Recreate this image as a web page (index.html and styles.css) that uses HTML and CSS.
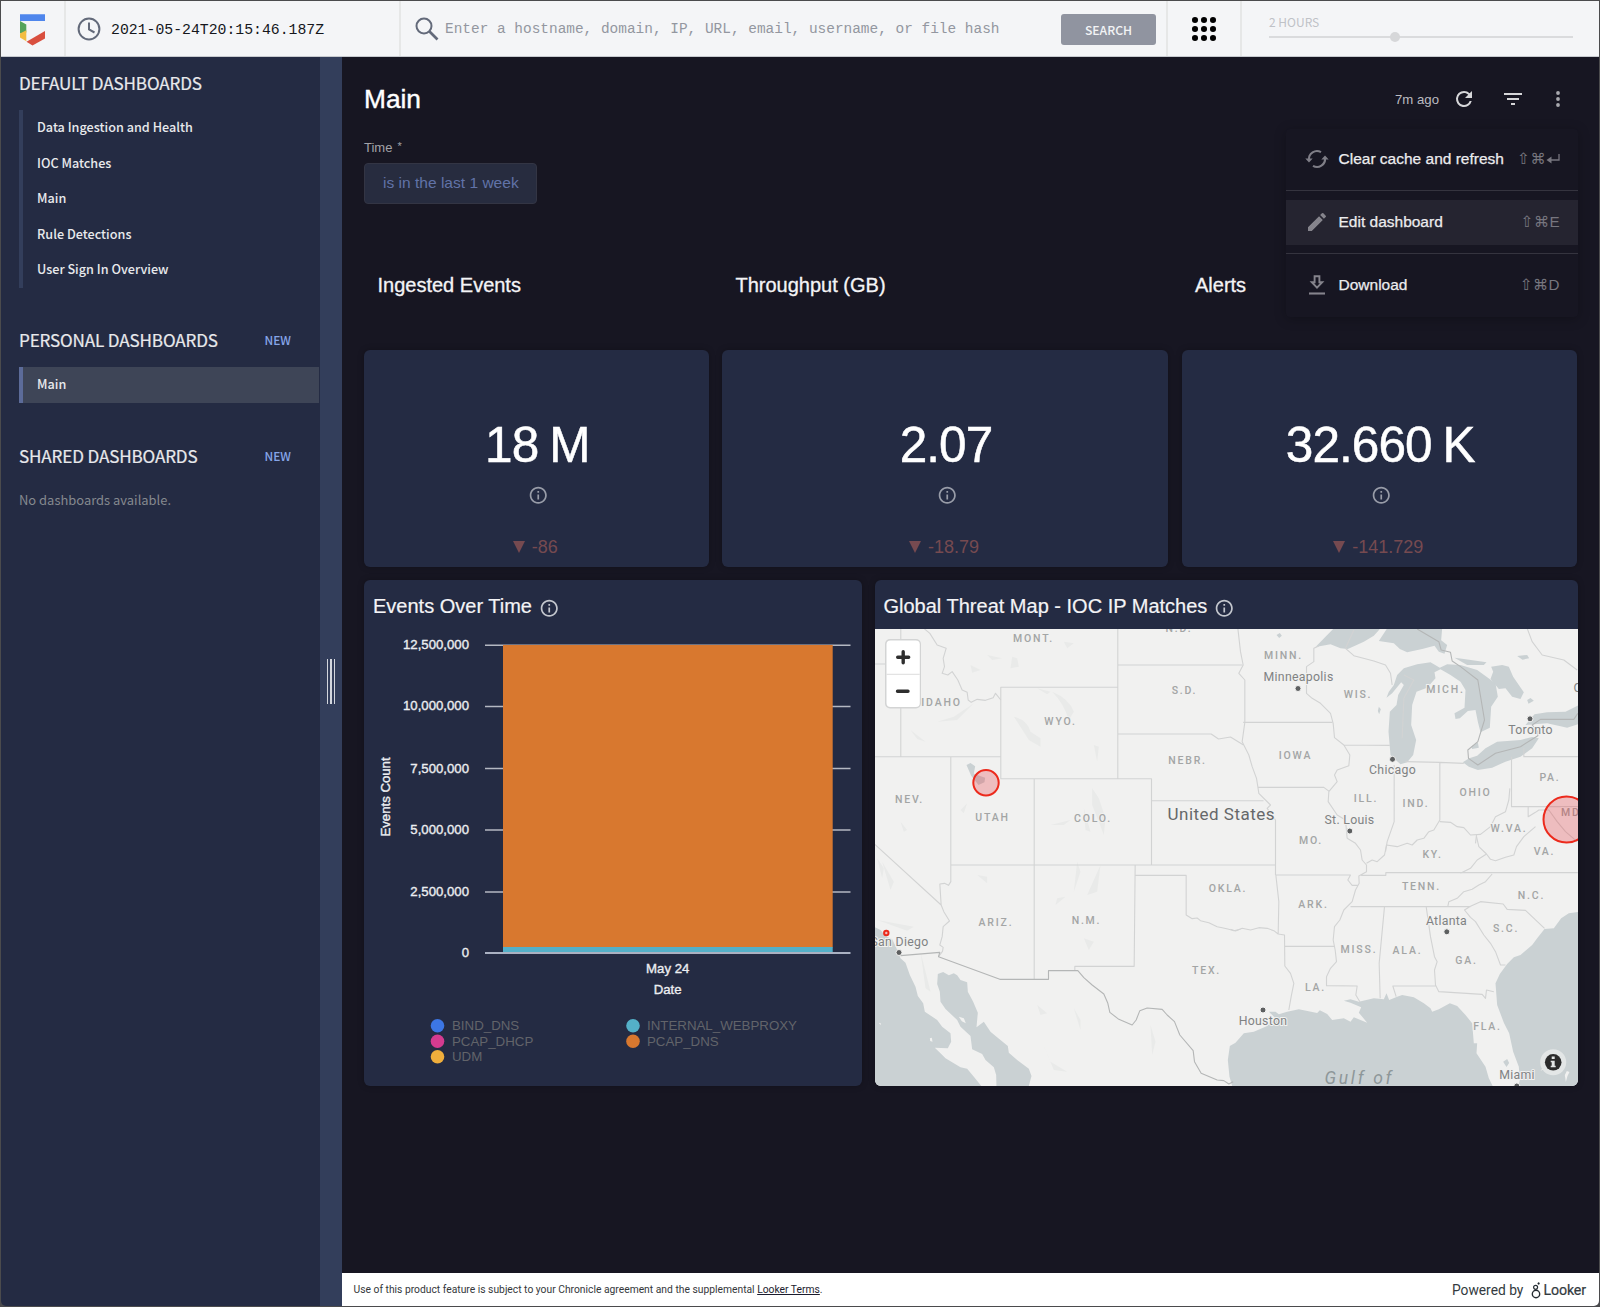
FILE: index.html
```html
<!DOCTYPE html>
<html lang="en">
<head>
<meta charset="utf-8">
<title>Main dashboard</title>
<link rel="stylesheet" href="styles.css">
</head>
<body>
<svg class="defs" width="0" height="0" aria-hidden="true">
  <symbol id="info" viewBox="0 0 24 24"><path d="M11 7h2v2h-2zm0 4h2v6h-2zm1-9C6.48 2 2 6.48 2 12s4.48 10 10 10 10-4.48 10-10S17.52 2 12 2zm0 18c-4.41 0-8-3.59-8-8s3.59-8 8-8 8 3.59 8 8-3.59 8-8 8z"/></symbol>
</svg>
<div class="window">
  <header class="topbar">
    <div class="logo">
      <svg width="26" height="32" viewBox="0 0 26 32"><path fill="#4f86ec" d="M0 .3h25v6.700H0z"/><path fill="#54a35b" d="M0 7l6.300 3.500v8L0 19.500z"/><path fill="#f2bd42" d="M0 19.500l6.300-3.300v11L0 23.500z"/><path fill="#d94f3f" d="M25 17v7.500L12.500 31.500 6.500 27.800z"/></svg>
    </div>
    <div class="clock">
      <svg width="24" height="24" viewBox="0 0 24 24" fill="none" stroke="#636a7a" stroke-width="2"><circle cx="12" cy="12" r="10.400"/><path d="M12 5.500v7l5.500 3"/></svg>
      <span class="mono">2021-05-24T20:15:46.187Z</span>
    </div>
    <div class="search">
      <svg width="24" height="24" viewBox="0 0 24 24" fill="none" stroke="#636a7a" stroke-width="2"><circle cx="9" cy="9" r="7.500"/><path d="M14.500 14.500L22.500 22.500" stroke-width="2.600"/></svg>
      <span class="mono placeholder">Enter a hostname, domain, IP, URL, email, username, or file hash</span>
      <button class="search-btn">SEARCH</button>
    </div>
    <div class="apps">
      <svg width="26" height="26" viewBox="0 0 26 26"><circle cx="4" cy="4" r="3.050"/><circle cx="13" cy="4" r="3.050"/><circle cx="22" cy="4" r="3.050"/><circle cx="4" cy="13" r="3.050"/><circle cx="13" cy="13" r="3.050"/><circle cx="22" cy="13" r="3.050"/><circle cx="4" cy="22" r="3.050"/><circle cx="13" cy="22" r="3.050"/><circle cx="22" cy="22" r="3.050"/></svg>
    </div>
    <div class="range">
      <span>2 HOURS</span>
      <svg width="304" height="12" viewBox="0 0 304 12"><path d="M0 6h304" stroke="#dadbdd" stroke-width="2"/><circle cx="126" cy="6" r="5" fill="#d6d7d9"/></svg>
    </div>
  </header>

  <div class="body">
    <nav class="sidebar">
      <section>
        <h2>DEFAULT DASHBOARDS</h2>
        <ul>
          <li>Data Ingestion and Health</li>
          <li>IOC Matches</li>
          <li>Main</li>
          <li>Rule Detections</li>
          <li>User Sign In Overview</li>
        </ul>
      </section>
      <section>
        <h2>PERSONAL DASHBOARDS <a>NEW</a></h2>
        <ul class="selected"><li>Main</li></ul>
      </section>
      <section>
        <h2>SHARED DASHBOARDS <a>NEW</a></h2>
        <p>No dashboards available.</p>
      </section>
    </nav>
    <div class="resizer"><i></i><i></i><i></i></div>

    <div class="content">
      <main>
        <div class="title-row">
          <h1>Main</h1>
          <span class="ago">7m ago</span>
          <svg class="ic-refresh" width="24" height="24" viewBox="0 0 24 24"><path fill="#d6d6d9" d="M17.650 6.350A7.960 7.960 0 0 0 12 4a8 8 0 1 0 7.730 10h-2.080A6 6 0 1 1 12 6c1.660 0 3.140.69 4.220 1.780L13 11h7V4z"/></svg>
          <svg class="ic-filter" width="24" height="24" viewBox="0 0 24 24"><path fill="#d6d6d9" d="M10 18h4v-2h-4zM3 6v2h18V6zm3 7h12v-2H6z"/></svg>
          <svg class="ic-more" width="24" height="24" viewBox="0 0 24 24"><g fill="#a9a9af"><circle cx="12" cy="6" r="1.900"/><circle cx="12" cy="12" r="1.900"/><circle cx="12" cy="18" r="1.900"/></g></svg>
        </div>

        <div class="menu">
          <div class="item">
            <svg width="24" height="24" viewBox="0 0 24 24" fill="none" stroke="#7f7e87" stroke-width="2.100"><path d="M4 13a8 8 0 0 1 12-7.800M20 11a8 8 0 0 1-12 7.800"/><path d="M.3 11.500h7.400L4 15.500zM16.300 12.500h7.400L20 8.500z" fill="#7f7e87" stroke="none"/></svg>
            <span>Clear cache and refresh</span><kbd>⇧⌘<svg width="14" height="12" viewBox="0 0 14 12" fill="none" stroke="currentColor" stroke-width="1.300"><path d="M13 1v6H3"/><path d="M5.500 3.500L.5 7l5 3.500z" fill="currentColor" stroke="none"/></svg></kbd>
          </div>
          <hr>
          <div class="item active">
            <svg width="26" height="26" viewBox="0 0 24 24"><path fill="#85848c" d="M3 17.250V21h3.750L17.810 9.940l-3.750-3.750zM20.710 7.040a1 1 0 0 0 0-1.410l-2.340-2.340a1 1 0 0 0-1.410 0l-1.830 1.830 3.750 3.750z"/></svg>
            <span>Edit dashboard</span><kbd>⇧⌘E</kbd>
          </div>
          <hr>
          <div class="item">
            <svg width="24" height="24" viewBox="0 0 24 24" fill="none" stroke="#85848c" stroke-width="1.900"><path d="M9.600 3.200h4.800v6h2.800L12 14.600 6.800 9.200h2.800z"/><path d="M4 20.500h16" stroke-width="2.100"/></svg>
            <span>Download</span><kbd>⇧⌘D</kbd>
          </div>
        </div>

        <label>Time <sup>*</sup></label>
        <div class="filter">is in the last 1 week</div>

        <div class="grid heads"><h3>Ingested Events</h3><h3>Throughput (GB)</h3><h3>Alerts</h3></div>

        <div class="grid kpis">
          <div class="card kpi"><strong>18 M</strong><svg class="info"><use href="#info"/></svg><em><i></i>-86</em></div>
          <div class="card kpi"><strong>2.07</strong><svg class="info"><use href="#info"/></svg><em><i></i>-18.79</em></div>
          <div class="card kpi"><strong>32.660 K</strong><svg class="info"><use href="#info"/></svg><em><i></i>-141.729</em></div>
        </div>

        <div class="row">
          <div class="card chart">
            <div class="card-head">Events Over Time <svg class="info"><use href="#info"/></svg></div>
            <svg class="plot" width="498" height="457" viewBox="364 629 498 457">
              <g stroke="#b4b8c2" stroke-width="1.500"><path d="M485 645.300H850.500M485 706.500H850.500M485 768.500H850.500M485 830H850.500M485 892H850.500"/></g>
              <path fill="#d8782f" d="M503 645h329.700v302.500H503z"/>
              <path fill="#54b0c8" d="M503 947h329.700v6H503z"/>
              <path stroke="#aab1c2" stroke-width="1.800" d="M485 953H850.500"/>
              <g class="axis" text-anchor="end"><text x="469" y="649.200">12,500,000</text><text x="469" y="710.300">10,000,000</text><text x="469" y="772.500">7,500,000</text><text x="469" y="833.600">5,000,000</text><text x="469" y="895.700">2,500,000</text><text x="469" y="956.700">0</text></g>
              <g class="axis" text-anchor="middle"><text x="667.700" y="973">May 24</text><text x="667.700" y="994">Date</text><text transform="translate(389.500 797) rotate(-90)">Events Count</text></g>
              <g class="legend">
                <circle cx="437.500" cy="1025.700" r="6.800" fill="#3c76e5"/><text x="452" y="1030">BIND_DNS</text>
                <circle cx="437.500" cy="1041.300" r="6.800" fill="#d43b90"/><text x="452" y="1045.700">PCAP_DHCP</text>
                <circle cx="437.500" cy="1056.800" r="6.800" fill="#efae3c"/><text x="452" y="1061.200">UDM</text>
                <circle cx="633" cy="1025.700" r="6.800" fill="#54b0c8"/><text x="647" y="1030">INTERNAL_WEBPROXY</text>
                <circle cx="633" cy="1041.300" r="6.800" fill="#d8782f"/><text x="647" y="1045.700">PCAP_DNS</text>
              </g>
            </svg>
          </div>

          <div class="card map">
            <div class="card-head">Global Threat Map - IOC IP Matches <svg class="info"><use href="#info"/></svg></div>
            <svg class="plot" width="703" height="458" viewBox="874.500 629 703 458">
              <path fill="#f1f1f0" d="M874 629h704v458H874z"/>
              <!-- terrain shading -->
              <g fill="#e9eae9" transform="translate(870 575) scale(.33333)">
                <path d="M545 350q50 20 65 60l-15 25q-15-50-50-85zM430 425q40 10 50 45l30 20v25l-35-20q-25-40-45-70zM425 245l15 5 5 25-25 5zM120 465l45 35-25-8zM200 440l50-15 60-40-50 50zM500 340l40 10-10 8zM670 510l15 5-5 45zM665 640l20 30 20 60-5 50-15-40-20-50zM640 700l20 70-15-5zM540 750l60-15-20 15zM300 270l30 15-25 8zM270 705l20-20-10 30zM350 240l45 10-30 5zM580 200l30 5-20 15zM90 740l20 25-10 5z"/>
                <path d="M20 850l20 30-5 30zM35 860l35 60-10 25zM320 900l30 5v20zM620 860l-10 90 20-60zM690 870l-10 80-30 10zM560 970l25-5-30 25zM640 1090l30 10-15 25zM150 1130l30 120-15-10zM510 1390l30 70 50 30-40-5zM840 1350l15 50-10 40zM20 1035l110 20-20 12zM500 1290l30 25-20 5zM610 1300l20 35v30z"/>
              </g>
              <!-- lakes, inland water -->
              <g fill="#cad1d3" transform="translate(1230 575) scale(.33333)">
                <path d="M310 160L285 185 255 216 300 208 330 220 352 222 400 200 430 182 450 160zM470 160L445 198 490 205 508 222 530 232 575 222 612 212 625 230 642 236 650 210 632 196 635 160z"/>
                <path d="M520 280L500 300 490 330 475 350 468 368 485 355 512 322 520 330 503 360 498 390 478 410 474 470 480 540 510 568 530 562 548 540 557 495 542 450 545 390 558 350 590 338 615 310 612 292 630 283 660 300 690 320 705 345 702 398 672 415 675 432 688 430 712 408 735 405 742 440 750 472 778 458 782 395 802 365 795 325 740 285 690 270 650 268 628 278 600 262 560 268z"/>
                <path d="M672 248L700 252 768 262 760 270 710 270zM782 275L815 270 835 275 848 305 865 330 880 352 870 372 845 365 825 340 805 342 780 312 788 290zM890 375l10-6 10 8-16 9zM860 243l30-3 6 10-20 4zM445 395l6 8-5 15-4-10zM138 180l10-6 6 8-8 7z"/>
                <path d="M716 550L697 562 715 575 742 585 785 578 825 560 870 545 905 520 925 490 905 486 870 495 800 500 765 520 740 542zM722 515l20-13 3 16-20 4zM912 418L885 450 950 445 1010 458 1050 445V388L1005 410 950 412z"/>
              </g>
              <g fill="#cad1d3" transform="translate(870 575) scale(.33333)"><path d="M288 570l12-6 14 10-4 22 34 12-2 14-18 8-22-28z"/></g>
              <!-- oceans and gulfs -->
              <g fill="#cad1d3" transform="translate(870 830) scale(.33333)">
                <path d="M10 290L30 300 45 318 65 328 76 350 90 385 105 398 118 435 135 470 142 498 158 520 163 545 200 570 215 590 240 610 242 635 232 655 193 653 210 670 225 685 270 712 290 716 310 740 338 775H10z"/>
                <path d="M202 432L218 426 235 436 250 430 260 436 270 450 290 457 292 485 308 515 322 548 318 592 340 575 360 605 378 620 412 648 415 668 440 690 475 716 483 738 473 775H378L377 735 370 712 345 690 335 672 305 658 300 618 270 590 260 570 225 537 210 515 208 485 200 462z"/>
                <path fill="#f1f1f0" d="M265 560l15 5 6 15-12-6zM178 625l6-2 2 12-7-2zM25 578l6 2-1 6z"/>
              </g>
              <g fill="#cad1d3" transform="translate(1230 830) scale(.33333)">
                <path d="M-2 648L15 638 40 610 70 605 110 588 135 565 115 545 135 545 145 553 170 545 205 538 260 549 268 541 290 552 305 570 340 565 360 575 370 562 410 578 385 548 392 532 360 518 340 512 360 508 385 515 430 505 460 508 468 490 476 510 500 500 515 495 550 502 580 520 600 535 605 545 625 538 658 520 680 528 705 555 725 580 730 640 740 640 738 670 765 710 775 745 790 775H7L-3 740-8 690z"/>
                <path d="M1050 245L1015 250 992 265 970 295 942 297 920 325 905 345 870 375 850 382 830 402 808 432 795 460 800 525 820 578 836 610 848 665 865 710 868 750 862 775H1050zM818 695l12-8 6 12-8 12z"/>
                <path fill="#f1f1f0" d="M1003 735l6-12 8 3-6 12-5 18zM930 722l20-22 5 12z"/>
              </g>
              <!-- state borders -->
              <g class="border">
                <path d="M900.300 629V756.500M874 664H900.300M874 756.700H1000.300M950.300 756.700V882M1000.300 687.300H1117.300V778.700H1000.300zM1117.300 629V687.300M1117.300 665H1242M1117.300 734H1210.700L1218 739 1230 737 1243 745M1117.300 778.700H1151V865M1033.700 778.700V979.300M1151 800.700H1263M950.300 865H1274.700M1275 820V875"/>
                <g transform="translate(870 575) scale(.33333)"><path d="M160 160L178 175 200 210 227 220 218 250 222 275 215 295 232 300 245 290 262 315 275 345 290 352 293 375 302 382 320 373 345 376 368 368 375 355 391 375"/></g>
                <g transform="translate(870 830) scale(.33333)"><path d="M241 155L234 166 222 160 208 162 212 225 220 245 237 273 218 290 215 320 208 345 218 352 216 364 204 380M13 43L212 225M794 105L791 409H613V422M794 136H947V255L965 266 980 264 990 272 1015 278 1040 290 1055 293 1075 298 1090 302 1110 298"/></g>
                <g transform="translate(1230 830) scale(.33333)"><path d="M0 298L15 303 35 295 60 300 85 293 110 295 130 302 143 312 162 315 163 408 180 430 190 460 182 500 175 540M136 135H360L352 150 365 166H383M136 135L145 215 143 312M163 349H310M350 25L375 40 390 60 395 90 408 105 408 125 385 138 386 160 375 180 365 215 340 240 328 270 312 290 308 330 314 360 318 395 300 415 288 440 288 467 380 468 376 495 388 515M360 230H720M392 136H466V128H1042M462 230L446 400 449 505M587 230L600 320 612 380 620 395 612 420 615 465 625 485 755 493 765 505 768 480 790 485M615 468H487L497 500M720 229L702 240 720 262 735 275 760 315 780 340 795 365 810 405H825M720 229L750 215 818 222 830 238 885 241 942 295M652 229L655 215 680 205 700 185 725 178 745 165 765 155 785 132M690 130L720 115 740 90 768 72M738 20L745 50 768 72 780 88 795 92 825 82 850 75 858 50 880 20 915-10M408 100L425 90 440 95 462 75 468 45 500 50 530 40 545 45 560 30 580 25 595 5"/></g>
                <g transform="translate(1230 575) scale(.33333)"><path d="M22 160L30 230 38 270 25 295 43 315V440M38 442H305M43 442L35 500 55 540 65 575 78 610 82 635 85 655 120 690 110 700 135 735M82 637H280L297 650M265 213L250 220V260L228 275V355L245 370 270 385 300 415 308 445 312 488 340 510 358 540 355 572 320 585 312 600 320 620 295 650 293 680 320 720 345 735 350 790M345 220L370 242 430 258 465 270 480 295 485 330M340 510L478 511M491 570V740L470 800 465 830M525 560L628 562 700 565M628 562V735L610 765 595 770M843 545V695H1042M628 740L660 742 680 755 700 758 720 780 750 778 780 755 795 725 825 710 835 675 838 640M735 805L738 780M880 520V545H1042M893 695V725L915 712 925 705 955 705 980 740 1005 770 1040 800M890 160L905 200 935 240 1000 255 1040 285M520 300L550 315 520 370 515 490M370 165L345 220"/></g>
              </g>
              <!-- national borders -->
              <g class="border nation">
                <g transform="translate(870 830) scale(.33333)"><path d="M90 377L208 367 204 380 388 448H534V422H622L640 443 665 465 700 492 712 520 718 547 745 568 785 585 797 570 808 542 830 534 875 538 890 555 912 575 928 615 968 662 972 695 992 730 1040 750 1060 752 1075 762 1088 755"/></g>
                <g transform="translate(1230 575) scale(.33333)"><path d="M560 162L625 200 632 225 660 232 665 258 690 275 742 315 762 435 742 500 712 525 714 550 742 570 795 535 870 515 922 482V470L905 450 930 433H1030L1042 415"/></g>
              </g>
              <g class="state" text-anchor="middle">
                <text x="1033" y="641.500">MONT.</text><text x="1178.500" y="632">N.D.</text><text x="941" y="705.500">IDAHO</text><text x="1060" y="725">WYO.</text><text x="1184" y="694">S.D.</text><text x="1187" y="763.500">NEBR.</text><text x="909" y="803">NEV.</text><text x="992" y="820.500">UTAH</text><text x="1092.500" y="822">COLO.</text><text x="995.500" y="926">ARIZ.</text><text x="1086" y="924">N.M.</text><text x="1227.500" y="891.500">OKLA.</text><text x="1206" y="974">TEX.</text>
                <text x="1283" y="659">MINN.</text><text x="1357.500" y="698">WIS.</text><text x="1445" y="693">MICH.</text><text x="1295" y="758.500">IOWA</text><text x="1365.500" y="801.500">ILL.</text><text x="1415.500" y="806.500">IND.</text><text x="1475" y="795.500">OHIO</text><text x="1549.500" y="781">PA.</text><text x="1572.500" y="816">MD.</text><text x="1508.500" y="832">W.VA.</text><text x="1310.500" y="843.500">MO.</text><text x="1432" y="857.500">KY.</text><text x="1544" y="854.500">VA.</text><text x="1421" y="889.500">TENN.</text><text x="1531" y="898.500">N.C.</text><text x="1313" y="908">ARK.</text><text x="1505.500" y="932">S.C.</text><text x="1358.500" y="953">MISS.</text><text x="1407" y="953.500">ALA.</text><text x="1466" y="963.500">GA.</text><text x="1315" y="991">LA.</text><text x="1487" y="1029.500">FLA.</text>
              </g>
              <g class="city" text-anchor="middle">
                <text x="1298" y="681">Minneapolis</text><text x="1392" y="774">Chicago</text><text x="1349" y="824">St. Louis</text><text x="1530" y="733.500">Toronto</text><text x="1446" y="925">Atlanta</text><text x="1262.500" y="1024.500">Houston</text><text x="1516.500" y="1078.500">Miami</text><text x="899" y="945.500">San Diego</text><text x="1577.500" y="692">O</text>
              </g>
              <text class="country" x="1220.500" y="820" text-anchor="middle" textLength="107">United States</text>
              <text class="sea" x="1324" y="1084" textLength="67">Gulf of</text>
              <g fill="#5d5f60" stroke="#f4f4f3" stroke-width="1"><circle cx="1297.500" cy="688.500" r="3"/><circle cx="1392" cy="759.300" r="3"/><circle cx="1349.300" cy="831" r="3"/><circle cx="1529.500" cy="718.800" r="3"/><circle cx="1446.300" cy="931.800" r="3"/><circle cx="1262.500" cy="1010" r="3"/><circle cx="1516.300" cy="1086" r="3"/><circle cx="898.500" cy="952.500" r="3"/></g>
              <g fill="#e8222a" fill-opacity=".25" stroke="#ec2a1c" stroke-width="2"><circle cx="985.500" cy="782.700" r="12.700"/><circle cx="1566" cy="819.500" r="23"/><circle cx="885.800" cy="933" r="2.200"/></g>
              <g><rect x="884.500" y="639" width="36" height="69.500" rx="5" fill="#d3d4d4"/><rect x="886" y="640.500" width="33.300" height="66.500" rx="4" fill="#fff"/><path d="M886 674.300h33.300" stroke="#ddd"/><path d="M897.200 657.300h11M902.700 651.800v11M897 691.200h10.500" stroke="#2e2e2e" stroke-width="3.400" stroke-linecap="round"/></g>
              <g><circle cx="1552.700" cy="1062.300" r="13" fill="#e3e6e6"/><circle cx="1552.700" cy="1062.300" r="8.300" fill="#2b2b2b"/><path d="M1551.200 1056.500h3v2.500h-3zM1550.200 1060.700h4v5h1v1.600h-5v-1.600h1v-3.400h-1z" fill="#e3e6e6"/></g>
            </svg>
          </div>
        </div>
      </main>
      <footer>
        <span>Use of this product feature is subject to your Chronicle agreement and the supplemental <u>Looker Terms</u>.</span>
        <div class="powered"><span>Powered by</span><svg width="11" height="17" viewBox="0 0 11 17" fill="none" stroke="#262d33"><circle cx="5" cy="12" r="3.700" stroke-width="1.400"/><circle cx="4.600" cy="5.300" r="2" stroke-width="1.200"/><circle cx="7.600" cy="1.500" r=".9" fill="#262d33" stroke-width=".4"/></svg><span class="looker">Looker</span></div>
      </footer>
    </div>
  </div>
</div>
</body>
</html>
```
FILE: styles.css
```css
* { box-sizing: border-box; }
body { margin: 0; background: #4b4b4d; font-family: "Liberation Sans", Arial, sans-serif; }
.defs { display: block; position: absolute; }
h1, h2, h3, ul, p { margin: 0; padding: 0; font-weight: 400; }
ul { list-style: none; }
svg { flex: none; display: block; }
.window { width: 1600px; height: 1307px; border: 1px solid #4b4b4d; display: flex; flex-direction: column; overflow: hidden; border-radius: 0 0 6px 6px; }

.topbar { height: 56px; flex: none; background: #f4f5f7; border-bottom: 1px solid #c7cacf; display: flex; }
.topbar > div { display: flex; align-items: center; border-right: 2px solid #e6e7e7; }
.logo { width: 65px; padding: 3px 0 0 19px; }
.clock { width: 335px; padding-left: 11px; gap: 10px; }
.mono { font-family: "Liberation Mono", monospace; font-size: 14.8px; color: #15171c; white-space: pre; padding-top: 2px; }
.search { width: 767px; padding-left: 14px; }
.search .placeholder { font-size: 14.45px; color: #9397a0; margin-left: 6px; width: 616px; padding-top: 1px; }
.search-btn { width: 95px; height: 31px; border: 0; border-radius: 3px; background: #9094a0; color: #f2f3f5; font: 500 12.2px/30px "Noto Sans CJK SC", sans-serif; padding: 0; margin-top: 2px; }
.apps { width: 74px; justify-content: center; }
.topbar .range { flex: 1; flex-direction: column; align-items: flex-start; padding: 13px 0 0 27px; border: 0; }
.range span { font: 12px/16px "Noto Sans CJK SC", sans-serif; color: #bfc2c7; }
.range svg { margin-top: 1px; }

.body { flex: 1; display: flex; min-height: 0; }
.sidebar { width: 319px; background: #242b43; padding: 14px 1px 0 18px; font-family: "Noto Sans CJK SC", sans-serif; color: #e8e9ec; }
.sidebar h2 { font-size: 17.1px; line-height: 24px; display: flex; justify-content: space-between; padding-right: 28px; letter-spacing: -.15px; white-space: nowrap; -webkit-text-stroke: .2px #e8e9ec; }
.sidebar h2 a { font-size: 11.9px; font-weight: 500; color: #86a5e8; letter-spacing: 0; -webkit-text-stroke: 0; }
.sidebar ul { margin-top: 15px; border-left: 4px solid #333e5b; }
.sidebar li { height: 35.6px; line-height: 34.5px; padding-left: 14px; font-size: 12.65px; font-weight: 500; }
.sidebar .selected { border-color: #5c6b99; background: #3e4557; }
.sidebar section { margin-bottom: 40.5px; }
.sidebar p { font-size: 12.95px; line-height: 20px; margin-top: 22px; color: #85898f; }
.resizer { width: 22px; background: #333e5b; display: flex; align-items: center; justify-content: center; gap: 2px; }
.resizer i { width: 1.6px; height: 45px; background: #d3d6dd; }

.content { flex: 1; display: flex; flex-direction: column; background: #171622; min-width: 0; }
main { flex: 1; position: relative; padding: 24px 21.5px 0 22px; color: #f4f4f6; }
.title-row { display: flex; align-items: center; height: 36px; }
h1 { font-size: 26.3px; line-height: 32px; flex: 1; color: #fff; -webkit-text-stroke: .4px #fff; }
.ago { font-size: 13.2px; color: #bcbcc1; margin-right: 13px; }
.ic-filter { margin-left: 25px; }
.ic-more { margin: 0 8px 0 20.5px; }
label { display: block; font-size: 13px; line-height: 18px; color: #a2a2a8; margin-top: 22px; }
label sup { font-size: 11px; line-height: 0; vertical-align: 2px; margin-left: 1.5px; }
.filter { width: 173px; height: 40.5px; margin-top: 6px; border: 1px solid #333544; border-radius: 4px; background: #272c3f; color: #6173a8; font-size: 15.55px; line-height: 38px; padding-left: 18px; white-space: nowrap; }

.menu { position: absolute; left: 943.5px; top: 71.5px; width: 292px; height: 188px; padding-top: 8px; background: #171622; border-radius: 4px; box-shadow: 0 2px 12px rgba(0, 0, 0, .25); }
.item { height: 45px; display: flex; align-items: center; padding: 0 17.5px 0 19px; font-size: 15.5px; color: #ececee; white-space: nowrap; }
.item > svg { width: 24px; }
.item span { margin-left: 10px; flex: 1; -webkit-text-stroke: .25px #ececee; }
.item kbd { font: 15.2px "Liberation Sans", "DejaVu Sans", sans-serif; color: #77767f; display: flex; align-items: center; letter-spacing: .4px; }
.item.active { background: #252430; }
.menu hr { border: 0; height: 1.5px; background: #35343f; margin: 8px 0 8.7px; }

.grid { display: grid; grid-template-columns: 344.5px 446px 395.5px; column-gap: 13.5px; }
.heads { margin-top: 69px; height: 24px; line-height: 24px; }
h3 { font-size: 20px; padding-left: 13.5px; -webkit-text-stroke: .3px #f4f4f6; }
.kpis { margin-top: 53px; }
.card { background: #242b43; border-radius: 6px; box-shadow: 0 0 6px rgba(0, 0, 0, .25); overflow: hidden; }
.kpi { height: 217px; display: flex; flex-direction: column; align-items: center; padding-top: 67px; }
.kpi strong { font-size: 49.5px; line-height: 55px; height: 56px; font-weight: 400; color: #fff; letter-spacing: -.9px; word-spacing: -2px; margin-left: 2px; -webkit-text-stroke: .5px #fff; }
.info { width: 20.5px; height: 20.5px; fill: #989ca8; }
.kpi .info { margin: 12px 0 0 4px; }
.kpi em { font-style: normal; font-size: 18px; line-height: 24px; color: #764a50; display: flex; align-items: center; gap: 7px; margin: 29.5px 0 0 -2px; }
.kpi em i { border: 6.5px solid transparent; border-top: 12px solid #764a50; border-bottom: 0; }

.row { display: grid; grid-template-columns: 497.5px 703px; gap: 13px; margin-top: 13.5px; height: 506px; }
.card-head { height: 48.5px; display: flex; align-items: center; gap: 7px; font-size: 20px; padding: 4px 0 0 9px; white-space: nowrap; -webkit-text-stroke: .2px #f4f4f6; }
.card-head .info { fill: #c3c6cd; margin-top: 3px; }
.axis { font-size: 13.2px; fill: #eceef1; stroke: #eceef1; stroke-width: .35px; }
.legend text { font-size: 13.3px; fill: #62646a; }
.border path { fill: none; stroke: #d2d3d3; stroke-width: 1.1px; vector-effect: non-scaling-stroke; stroke-linejoin: round; }
.nation path { stroke: #b4b6b6; }
.state, .city, .country, .sea { font-family: Roboto, sans-serif; paint-order: stroke; stroke: #f1f1f0; stroke-width: 2px; }
.state { font-size: 10.5px; font-weight: 500; letter-spacing: 1.8px; fill: #a3a5a5; }
.city { font-size: 12.3px; letter-spacing: .3px; fill: #808283; }
.country { font-size: 17px; fill: #66686a; }
.sea { font-size: 17.5px; font-style: italic; fill: #8e9799; stroke: none; }

footer { height: 33px; background: #fff; display: flex; align-items: center; justify-content: space-between; padding: 1px 13px 0 11.5px; font: 10.3px/16px Roboto, sans-serif; color: #34373b; }
footer u { color: #1b1c2e; }
.powered { display: flex; align-items: center; font-size: 13.8px; color: #333a40; }
.powered svg { margin: 0 1px 0 8px; }
.looker { font-size: 14.2px; letter-spacing: -.1px; -webkit-text-stroke: .2px #333a40; }
```
